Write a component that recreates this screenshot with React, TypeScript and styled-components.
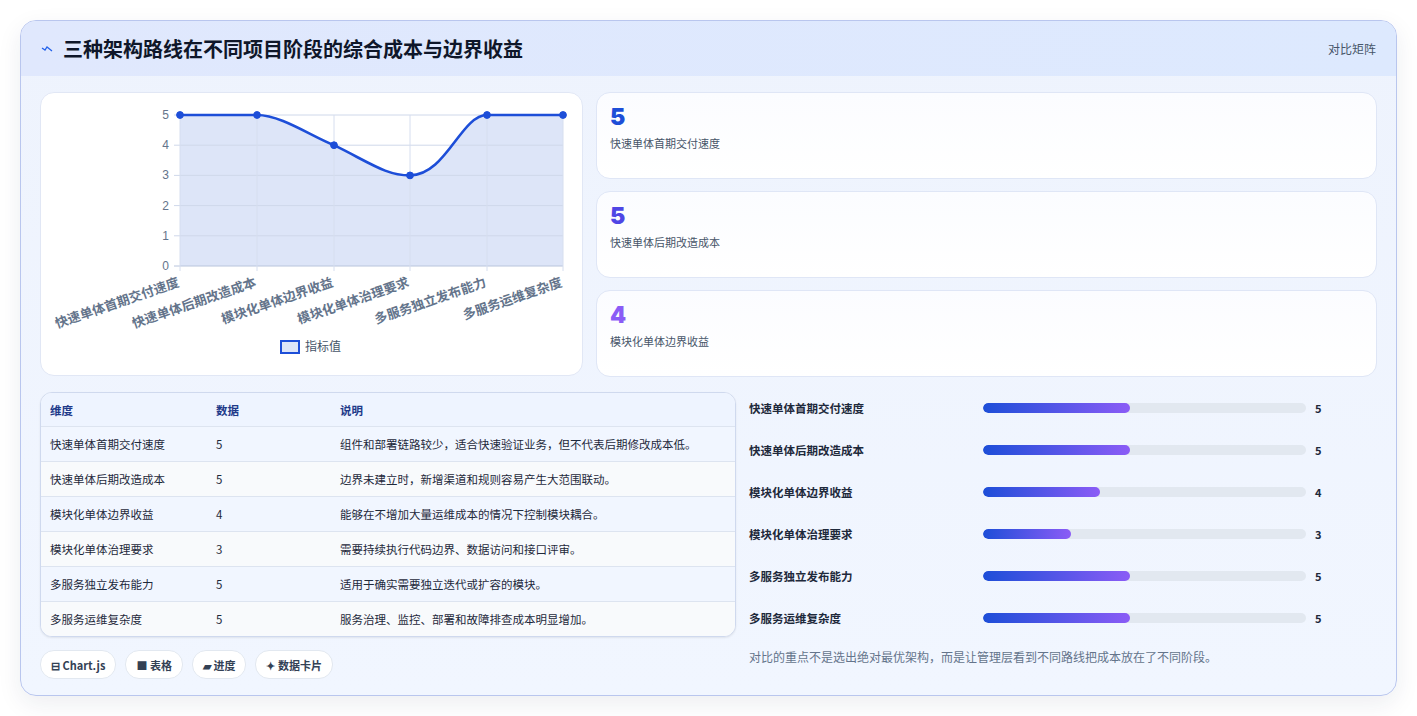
import React from "react";
import styled, { createGlobalStyle } from "styled-components";

const Global = createGlobalStyle`
  html, body { margin: 0; padding: 0; background: #ffffff; }
  body { font-family: "Noto Sans CJK SC", "Noto Sans", sans-serif; color: #0f172a; }
`;

const Page = styled.div`
  padding: 20px 20px 20px 20px;
  width: 1417px;
  box-sizing: border-box;
`;
const Card = styled.div`
  width: 1377px;
  height: 676px;
  box-sizing: border-box;
  border: 1px solid #b9c6ee;
  border-radius: 16px;
  background: linear-gradient(180deg, #eef3fd 0%, #f1f6ff 100%);
  overflow: hidden;
  box-shadow: 0 8px 24px rgba(30, 41, 80, 0.08);
`;
const Header = styled.div`
  height: 55px;
  display: flex;
  align-items: center;
  justify-content: space-between;
  padding: 0 20px;
  background: linear-gradient(90deg, #e0e8fd, #dde9fe);
`;
const Title = styled.h1`
  margin: 0;
  display: flex;
  align-items: center;
  gap: 10px;
  font-size: 20px;
  font-weight: 700;
  color: #0f172a;
`;
const Tag = styled.span`
  font-size: 12px;
  color: #475569;
`;
const Body = styled.div`
  padding: 16px 19px 0 19px;
  display: flex;
  flex-direction: column;
  gap: 15px;
`;
const TopRow = styled.div`
  display: grid;
  grid-template-columns: 543px 1fr;
  gap: 13px;
`;
const ChartCard = styled.div`
  background: #fff;
  border: 1px solid #e1e7f5;
  border-radius: 14px;
  height: 284px;
  box-sizing: border-box;
`;
const Stats = styled.div`
  display: flex;
  flex-direction: column;
  gap: 12px;
`;
const Stat = styled.div`
  height: 87px;
  box-sizing: border-box;
  border: 1px solid #dfe6f6;
  border-radius: 14px;
  background: linear-gradient(180deg, #fbfcff, #ffffff);
  padding: 11px 13px;
`;
const StatNum = styled.div<{ $c: string }>`
  font-family: Inter, "Noto Sans", sans-serif;
  font-size: 23px;
  font-weight: 900;
  line-height: 26px;
  color: ${(p) => p.$c};
`;
const StatLabel = styled.div`
  font-size: 11px;
  color: #475569;
  margin-top: 5px;
`;
const BottomRow = styled.div`
  display: grid;
  grid-template-columns: 696px 1fr;
  gap: 13px;
`;
const LeftCol = styled.div`
  display: flex;
  flex-direction: column;
  gap: 13px;
`;
const Table = styled.div`
  border: 1px solid #cfd9ee;
  border-radius: 12px;
  overflow: hidden;
  background: #fff;
  box-shadow: 0 1px 2px rgba(0,0,0,0.08);
`;
const TRow = styled.div<{ $head?: boolean; $alt?: boolean }>`
  display: grid;
  grid-template-columns: 166px 124px 1fr;
  padding-left: 9px;
  height: ${(p) => (p.$head ? 33 : 34)}px;
  align-items: center;
  font-size: 11.5px;
  color: ${(p) => (p.$head ? "#1e3a8a" : "#1e293b")};
  font-weight: ${(p) => (p.$head ? 600 : 400)};
  background: ${(p) => (p.$head ? "#eef4ff" : p.$alt ? "#f8fafc" : "#f1f6ff")};
  border-top: ${(p) => (p.$head ? "none" : "1px solid #dde4f0")};
`;
const Chips = styled.div`
  display: flex;
  gap: 9px;
`;
const Chip = styled.span`
  display: inline-flex;
  align-items: center;
  gap: 3px;
  height: 27px;
  padding: 0 10px;
  border: 1px solid #e2e8f0;
  border-radius: 14px;
  background: #fff;
  font-size: 11px;
  font-weight: 600;
  color: #334155;
`;
const RightCol = styled.div`
  display: flex;
  flex-direction: column;
  margin-top: -5px;
`;
const PRow = styled.div`
  display: grid;
  grid-template-columns: 225px 323px auto;
  align-items: center;
  column-gap: 9px;
  height: 42px;
`;
const PLabel = styled.span`
  font-size: 11.5px;
  font-weight: 600;
  color: #1e293b;
`;
const Track = styled.div`
  height: 10px;
  border-radius: 5px;
  background: #e2e8f0;
  overflow: hidden;
`;
const Fill = styled.div`
  height: 100%;
  border-radius: 5px;
  background: linear-gradient(90deg, #1d4ed8, #8b5cf6);
`;
const PVal = styled.span`
  font-size: 11px;
  font-weight: 700;
  color: #1e293b;
`;
const Note = styled.div`
  font-size: 12px;
  color: #64748b;
  margin-top: 9px;
`;

const rows = [
  ["快速单体首期交付速度", 5, "组件和部署链路较少，适合快速验证业务，但不代表后期修改成本低。"],
  ["快速单体后期改造成本", 5, "边界未建立时，新增渠道和规则容易产生大范围联动。"],
  ["模块化单体边界收益", 4, "能够在不增加大量运维成本的情况下控制模块耦合。"],
  ["模块化单体治理要求", 3, "需要持续执行代码边界、数据访问和接口评审。"],
  ["多服务独立发布能力", 5, "适用于确实需要独立迭代或扩容的模块。"],
  ["多服务运维复杂度", 5, "服务治理、监控、部署和故障排查成本明显增加。"],
] as const;

function Chart() {
  const xs = [139, 216, 293, 369, 446, 522];
  const y = (v: number) => 22 + (5 - v) * 30.2;
  const vals = rows.map((r) => r[1] as number);
  const pts = xs.map((x, i) => [x, y(vals[i])]);
  const d =
    `M${pts[0][0]},${pts[0][1]} L${pts[1][0]},${pts[1][1]} ` +
    `C${240},${pts[1][1]} ${270},${y(4.3)} ${293},${y(4)} ` +
    `C${330},${y(3.4)} ${345},${y(3)} ${369},${y(3)} ` +
    `C${405},${y(3)} ${420},${y(5)} ${446},${y(5)} L${522},${y(5)}`;
  const area = d + ` L522,${y(0)} L139,${y(0)} Z`;
  return (
    <svg width="541" height="282" viewBox="0 0 541 282">
      <path d={area} fill="#dde5f8" />
      {[0, 1, 2, 3, 4, 5].map((v) => (
        <g key={v}>
          <line x1={133} x2={522} y1={y(v)} y2={y(v)} stroke={v === 0 ? "#b8c4dc" : "#cfd8ea"} />
          <text x={128} y={y(v) + 4} fontSize="12" textAnchor="end" fill="#64748b" fontFamily="Liberation Sans, sans-serif">{v}</text>
        </g>
      ))}
      {xs.map((x) => (
        <line key={x} x1={x} x2={x} y1={y(5)} y2={y(0) + 5} stroke="#d6deef" />
      ))}
      <path d={d} fill="none" stroke="#1d4ed8" strokeWidth="2.6" />
      {pts.map(([px, py], i) => (
        <circle key={i} cx={px} cy={py} r="3.4" fill="#1d4ed8" stroke="#1d4ed8" />
      ))}
      {rows.map((r, i) => (
        <text key={i} x={xs[i]} y={y(0) + 20} fontSize="13" fontWeight="600" fill="#64748b" textAnchor="end"
          transform={`rotate(-19 ${xs[i]} ${y(0) + 20})`} fontFamily="Noto Sans CJK SC, sans-serif">{r[0]}</text>
      ))}
      <rect x={240} y={248} width={18} height={12} fill="#dde5f8" stroke="#1d4ed8" strokeWidth="2" />
      <text x={264} y={258} fontSize="12" fill="#475569" fontFamily="Noto Sans CJK SC, sans-serif">指标值</text>
    </svg>
  );
}

export default function App() {
  return (
    <>
      <Global />
      <Page>
        <Card>
          <Header>
            <Title>
              <svg width="12" height="12" viewBox="0 0 12 12"><path d="M1 5 L4 7 L6 4 L11 8" fill="none" stroke="#2563eb" strokeWidth="1.3" /></svg>
              三种架构路线在不同项目阶段的综合成本与边界收益
            </Title>
            <Tag>对比矩阵</Tag>
          </Header>
          <Body>
            <TopRow>
              <ChartCard><Chart /></ChartCard>
              <Stats>
                <Stat><StatNum $c="#1d4ed8">5</StatNum><StatLabel>快速单体首期交付速度</StatLabel></Stat>
                <Stat><StatNum $c="#4f46e5">5</StatNum><StatLabel>快速单体后期改造成本</StatLabel></Stat>
                <Stat><StatNum $c="#8b5cf6">4</StatNum><StatLabel>模块化单体边界收益</StatLabel></Stat>
              </Stats>
            </TopRow>
            <BottomRow>
              <LeftCol>
                <Table>
                  <TRow $head><span>维度</span><span>数据</span><span>说明</span></TRow>
                  {rows.map((r, i) => (
                    <TRow key={i} $alt={i % 2 === 1}><span>{r[0]}</span><span>{r[1]}</span><span>{r[2]}</span></TRow>
                  ))}
                </Table>
                <Chips>
                  <Chip>⊟ Chart.js</Chip>
                  <Chip>■ 表格</Chip>
                  <Chip>▰ 进度</Chip>
                  <Chip>✦ 数据卡片</Chip>
                </Chips>
              </LeftCol>
              <RightCol>
                {rows.map((r, i) => (
                  <PRow key={i}>
                    <PLabel>{r[0]}</PLabel>
                    <Track><Fill style={{ width: `${((r[1] as number) / 11) * 100}%` }} /></Track>
                    <PVal>{r[1]}</PVal>
                  </PRow>
                ))}
                <Note>对比的重点不是选出绝对最优架构，而是让管理层看到不同路线把成本放在了不同阶段。</Note>
              </RightCol>
            </BottomRow>
          </Body>
        </Card>
      </Page>
    </>
  );
}
